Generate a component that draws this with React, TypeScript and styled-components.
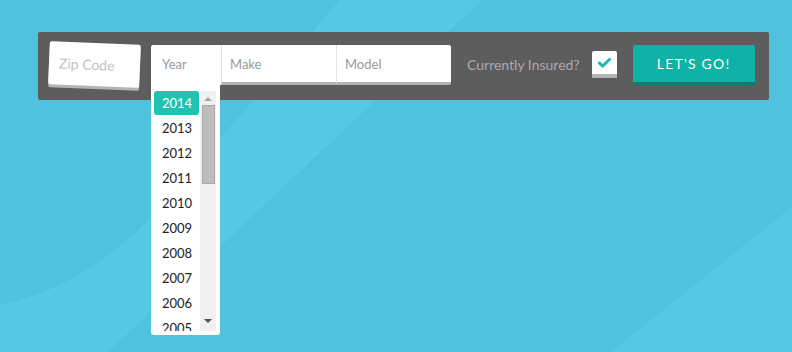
import React from "react";
import styled, { createGlobalStyle } from "styled-components";

const Global = createGlobalStyle`
  html, body { margin: 0; padding: 0; }
  body { font-family: "Lato", "Open Sans", sans-serif; overflow: hidden; }
`;

const Page = styled.div`
  display: grid;
  width: 792px;
  height: 352px;
  background: #50c2de;
  overflow: hidden;
`;

const Backdrop = styled.svg`
  grid-area: 1 / 1;
  width: 792px;
  height: 352px;
  display: block;
`;

const Content = styled.div`
  grid-area: 1 / 1;
  padding: 32px 23px 0 38px;
`;

const Bar = styled.div`
  display: flex;
  align-items: flex-start;
  width: 731px;
  height: 68px;
  box-sizing: border-box;
  padding: 13px 0 0 11px;
  background: #5d5d5d;
  border-radius: 2px;
`;

const ZipCard = styled.div`
  width: 91px;
  height: 43px;
  margin-top: -2px;
  box-sizing: border-box;
  padding-left: 10px;
  display: flex;
  align-items: center;
  background: #fff;
  border-radius: 2px;
  box-shadow: 0 3px 0 #b4b4b4;
  transform: rotate(2.4deg);
  color: #c2c2c2;
  font-size: 14px;
`;

const FieldGroup = styled.div`
  display: flex;
  margin-left: 11px;
  height: 40px;
`;

const Field = styled.div<{ $w: number; $first?: boolean; $last?: boolean }>`
  position: relative;
  width: ${(p) => p.$w}px;
  height: 40px;
  box-sizing: border-box;
  padding: 11px 0 0 ${(p) => (p.$first ? 11 : 8)}px;
  background: #fff;
  border-left: ${(p) => (p.$first ? "none" : "1px solid #e2e2e2")};
  border-bottom: ${(p) => (p.$first ? "none" : "3px solid #b3b3b3")};
  border-radius: ${(p) => (p.$first ? "2px 0 0 0" : p.$last ? "0 2px 2px 0" : "0")};
  color: #9a9a9a;
  font-size: 13px;
  line-height: 16px;
`;

const Dropdown = styled.div`
  position: absolute;
  left: 0;
  top: 40px;
  width: 69px;
  height: 250px;
  box-sizing: border-box;
  padding: 6px 4px 4px 3px;
  display: flex;
  background: #fff;
  border-radius: 0 0 3px 3px;
`;

const List = styled.div`
  flex: 1;
  overflow: hidden;
  padding-right: 1px;
`;

const Item = styled.div<{ $active?: boolean }>`
  height: 24px;
  margin-bottom: 1px;
  box-sizing: border-box;
  padding-left: 8px;
  display: flex;
  align-items: center;
  border-radius: 3px;
  font-size: 13px;
  color: ${(p) => (p.$active ? "#fff" : "#222")};
  background: ${(p) => (p.$active ? "#20c3b0" : "transparent")};
`;

const Scrollbar = styled.div`
  width: 16px;
  display: flex;
  flex-direction: column;
  align-items: center;
  background: #f0f0f0;
`;

const Arrow = styled.div<{ $down?: boolean }>`
  width: 0;
  height: 0;
  margin: ${(p) => (p.$down ? "auto 0 8px" : "6px 0 4px")};
  border-left: 4px solid transparent;
  border-right: 4px solid transparent;
  ${(p) =>
    p.$down
      ? "border-top: 4px solid #505050;"
      : "border-bottom: 4px solid #a3a3a3;"}
`;

const Thumb = styled.div`
  width: 13px;
  height: 79px;
  box-sizing: border-box;
  background: #bdbdbd;
  border: 1px solid #a9a9a9;
`;

const InsuredLabel = styled.div`
  margin: 10px 0 0 16px;
  color: #a9a9a9;
  font-size: 14px;
  line-height: 20px;
`;

const CheckBox = styled.div`
  width: 25px;
  height: 23px;
  margin: 6px 0 0 12px;
  display: flex;
  align-items: center;
  justify-content: center;
  background: #fff;
  border-radius: 2px 2px 0 0;
  box-shadow: 0 4px 0 #b5b5b5;
`;

const GoButton = styled.button`
  width: 122px;
  height: 40px;
  margin-left: 16px;
  padding: 0;
  border: none;
  border-bottom: 3px solid #0a7d72;
  border-radius: 2px;
  background: #0fb2a5;
  color: #fff;
  font-family: "Lato", sans-serif;
  font-size: 14px;
  letter-spacing: 1.2px;
  cursor: pointer;
`;

const years = [2014, 2013, 2012, 2011, 2010, 2009, 2008, 2007, 2006, 2005];

export default function App() {
  return (
    <>
      <Global />
      <Page>
        <Backdrop viewBox="0 0 792 352">
          <path
            d="M0,305 C60,292 110,262 160,208 L340,0 L482,0 L108,352 L0,352 Z"
            fill="#57c9e5"
          />
          <path d="M611,352 L792,207 L792,352 Z" fill="#57c9e5" />
        </Backdrop>
        <Content>
          <Bar>
            <ZipCard>Zip Code</ZipCard>
            <FieldGroup>
              <Field $w={70} $first>
                Year
                <Dropdown>
                  <List>
                    {years.map((y, i) => (
                      <Item key={y} $active={i === 0}>
                        {y}
                      </Item>
                    ))}
                  </List>
                  <Scrollbar>
                    <Arrow />
                    <Thumb />
                    <Arrow $down />
                  </Scrollbar>
                </Dropdown>
              </Field>
              <Field $w={115}>Make</Field>
              <Field $w={115} $last>
                Model
              </Field>
            </FieldGroup>
            <InsuredLabel>Currently Insured?</InsuredLabel>
            <CheckBox>
              <svg width="15" height="11" viewBox="0 0 15 11">
                <path
                  d="M1.5 5.2 L5.6 9 L13.5 1.5"
                  fill="none"
                  stroke="#1bbcb0"
                  strokeWidth="3"
                />
              </svg>
            </CheckBox>
            <GoButton>LET'S GO!</GoButton>
          </Bar>
        </Content>
      </Page>
    </>
  );
}
